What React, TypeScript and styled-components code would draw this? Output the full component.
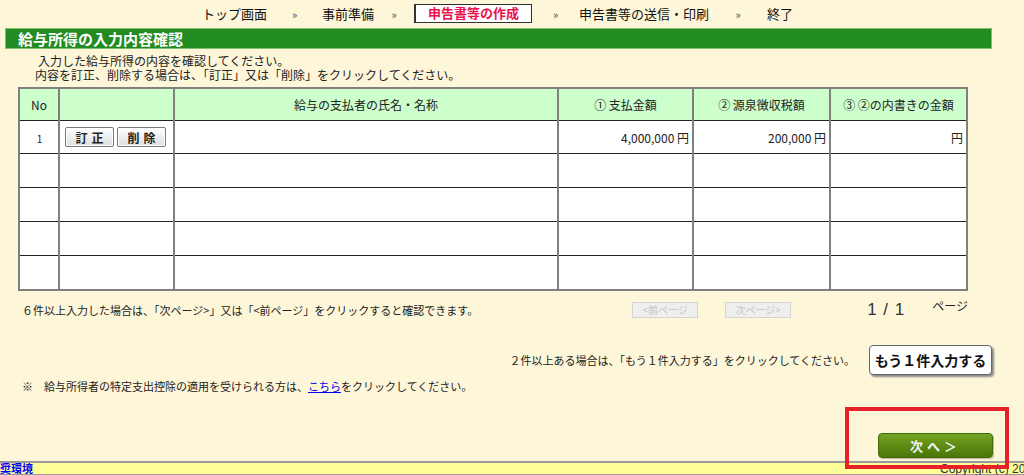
import React from "react";
import styled, { createGlobalStyle } from "styled-components";

const Global = createGlobalStyle`
  html, body { margin: 0; padding: 0; background: #fef6d9; }
  body { font-family: "Noto Sans CJK JP", "Noto Sans", sans-serif; color: #222; overflow: hidden; }
`;

const Page = styled.div`
  position: relative;
  width: 1024px;
  height: 475px;
  overflow: hidden;
  background: #fef6d9;
  font-size: 12px;
`;

const Nav = styled.div`
  display: flex;
  align-items: center;
  height: 28px;
  padding-left: 202px;
  font-size: 13px;
  line-height: 16px;
  color: #111;
`;

const NavItem = styled.span<{ $active?: boolean }>`
  white-space: nowrap;
  ${(p) =>
    p.$active
      ? `
    display: inline-flex; justify-content: center; align-items: center;
    width: 118px; height: 19px; box-sizing: border-box;
    background: #fff; border: 1px solid #333; border-left-width: 2px;
    color: #e8134e; font-weight: bold; margin-top: -2px;
  `
      : ""}
`;

const Sep = styled.span<{ $w: number }>`
  display: inline-block;
  width: ${(p) => p.$w}px;
  text-align: center;
  font-size: 11px;
  color: #444;
`;

const TitleBar = styled.div`
  margin-left: 5px;
  width: 987px;
  height: 21px;
  box-sizing: border-box;
  background: #228b22;
  border: 1px solid #7fbf6f;
  color: #fff;
  font-weight: bold;
  font-size: 15px;
  line-height: 19px;
  padding-left: 12px;
`;

const Intro = styled.div`
  margin-top: 5px;
  padding-left: 35px;
  font-size: 12px;
  line-height: 14px;
  p { margin: 0; }
  p:first-child { text-indent: 3px; }
`;

const Table = styled.table`
  margin: 5px 0 0 18px;
  border-collapse: collapse;
  table-layout: fixed;
  background: #fff;
  border: 2px solid #808080;
`;

const Th = styled.th<{ $w: number }>`
  width: ${(p) => p.$w}px;
  height: 31px;
  background: #ccffcc;
  font-weight: normal;
  font-size: 12px;
  color: #222;
  border-left: 2px solid #808080;
  border-bottom: 1px solid #222;
  padding: 0;
`;

const Tr = styled.tr<{ $h: number }>`
  height: ${(p) => p.$h}px;
`;

const Td = styled.td<{ $align?: string }>`
  padding: 0 3px 0 4px;
  border-left: 2px solid #808080;
  border-top: 1px solid #222;
  text-align: ${(p) => p.$align || "left"};
  font-size: 12px;
  white-space: nowrap;
`;

const SmallNo = styled.span`
  font-size: 10px;
`;

const EditBtn = styled.button`
  width: 49px;
  height: 20px;
  margin: 0 2px 0 1px;
  padding: 0;
  border: 1px solid #777;
  border-radius: 2px;
  background: linear-gradient(#ffffff, #dedede);
  font-family: inherit;
  font-weight: bold;
  font-size: 12px;
  letter-spacing: 4px;
  text-indent: 4px;
  color: #222;
  box-shadow: inset 0 0 0 1px #fff;
`;

const PageRow = styled.div`
  display: flex;
  align-items: center;
  justify-content: space-between;
  margin-top: 7px;
  height: 24px;
  padding: 0 56px 0 22px;
  font-size: 11px;
`;

const Pager = styled.div`
  display: flex;
  align-items: center;
`;

const DisabledBtn = styled.button<{ $ml: number }>`
  margin-left: ${(p) => p.$ml}px;
  width: 66px;
  height: 16px;
  padding: 0;
  border: 1px solid #d4d4d4;
  background: #efefef;
  color: #c4c4c4;
  font-family: inherit;
  font-size: 10px;
  line-height: 14px;
`;

const PageNum = styled.span`
  margin-left: 76px;
  font-family: "Liberation Sans", sans-serif;
  font-size: 17px;
  letter-spacing: 1px;
  color: #333;
`;

const PageLabel = styled.span`
  margin-left: 27px;
  margin-top: -8px;
  font-size: 12px;
`;

const AddRow = styled.div`
  display: flex;
  align-items: center;
  justify-content: flex-end;
  gap: 14px;
  margin-top: 23px;
  height: 30px;
  padding-right: 32px;
  font-size: 11px;
`;

const AddBtn = styled.button`
  width: 123px;
  height: 30px;
  padding: 0;
  border: 1px solid #666;
  border-radius: 4px;
  background: #fff;
  box-shadow: 2px 2px 2px #8a8a8a;
  font-family: inherit;
  font-weight: bold;
  font-size: 14px;
  color: #111;
`;

const Note = styled.div`
  margin-top: 5px;
  height: 13px;
  line-height: 13px;
  padding-left: 22px;
  font-size: 11px;
  a { color: #0000ee; text-decoration: underline; }
`;

const NextRow = styled.div`
  display: flex;
  justify-content: flex-end;
  margin-top: 40px;
  padding-right: 31px;
`;

const NextBtn = styled.button`
  width: 115px;
  height: 25px;
  padding: 0;
  border: 1px solid #3f6a08;
  border-radius: 4px;
  background: linear-gradient(#75a324, #5a8a12 55%, #4b780a);
  box-shadow: 1px 1px 1px rgba(0, 0, 0, 0.25);
  color: #f4f4f4;
  font-family: inherit;
  font-weight: bold;
  font-size: 13px;
  letter-spacing: 4px;
`;

const Footer = styled.div`
  display: grid;
  grid-template-columns: 940px max-content;
  align-items: start;
  margin-top: 3px;
  width: 1200px;
  height: 11px;
  background: #ffff99;
  border-top: 2px solid #9a9a9a;
  border-bottom: 2px solid #9a9a9a;
  font-size: 11px;
  line-height: 11px;
`;

const EnvCell = styled.div`
  overflow: hidden;
  height: 11px;
`;

const EnvLink = styled.a`
  display: inline-block;
  margin-left: -11px;
  color: #0000ff;
  font-weight: bold;
  font-size: 11px;
  line-height: 11px;
  text-decoration: underline;
`;

const Copyright = styled.span`
  font-family: "Liberation Sans", sans-serif;
  font-size: 12px;
  line-height: 12px;
  color: #333;
  white-space: nowrap;
`;

const Highlight = styled.div`
  position: absolute;
  left: 845px;
  top: 407px;
  width: 164px;
  height: 62px;
  box-sizing: border-box;
  border: 4px solid #e8202a;
  pointer-events: none;
`;

const widths = [38, 113, 382, 133, 135, 135];

const emptyRows = [0, 1, 2, 3];

export default function App() {
  return (
    <>
      <Global />
      <Page>
        <Nav>
          <NavItem>トップ画面</NavItem>
          <Sep $w={55}>»</Sep>
          <NavItem>事前準備</NavItem>
          <Sep $w={40}>»</Sep>
          <NavItem $active>申告書等の作成</NavItem>
          <Sep $w={47}>»</Sep>
          <NavItem>申告書等の送信・印刷</NavItem>
          <Sep $w={58}>»</Sep>
          <NavItem>終了</NavItem>
        </Nav>
        <TitleBar>給与所得の入力内容確認</TitleBar>
        <Intro>
          <p>入力した給与所得の内容を確認してください。</p>
          <p>内容を訂正、削除する場合は、「訂正」又は「削除」をクリックしてください。</p>
        </Intro>
        <Table>
          <thead>
            <tr>
              <Th $w={widths[0]}>No</Th>
              <Th $w={widths[1]}></Th>
              <Th $w={widths[2]}>給与の支払者の氏名・名称</Th>
              <Th $w={widths[3]}>① 支払金額</Th>
              <Th $w={widths[4]}>② 源泉徴収税額</Th>
              <Th $w={widths[5]}>③ ②の内書きの金額</Th>
            </tr>
          </thead>
          <tbody>
            <Tr $h={33}>
              <Td $align="center">
                <SmallNo>1</SmallNo>
              </Td>
              <Td>
                <EditBtn>訂正</EditBtn>
                <EditBtn>削除</EditBtn>
              </Td>
              <Td></Td>
              <Td $align="right">4,000,000 円</Td>
              <Td $align="right">200,000 円</Td>
              <Td $align="right">円</Td>
            </Tr>
            {emptyRows.map((r) => (
              <Tr $h={34} key={r}>
                <Td></Td>
                <Td></Td>
                <Td></Td>
                <Td></Td>
                <Td></Td>
                <Td></Td>
              </Tr>
            ))}
          </tbody>
        </Table>
        <PageRow>
          <span>６件以上入力した場合は、「次ページ&gt;」又は「&lt;前ページ」をクリックすると確認できます。</span>
          <Pager>
            <DisabledBtn $ml={0} disabled>
              &lt;前ページ
            </DisabledBtn>
            <DisabledBtn $ml={27} disabled>
              次ページ&gt;
            </DisabledBtn>
            <PageNum>1 / 1</PageNum>
            <PageLabel>ページ</PageLabel>
          </Pager>
        </PageRow>
        <AddRow>
          <span>２件以上ある場合は、「もう１件入力する」をクリックしてください。</span>
          <AddBtn>もう１件入力する</AddBtn>
        </AddRow>
        <Note>
          ※　給与所得者の特定支出控除の適用を受けられる方は、<a href="#">こちら</a>をクリックしてください。
        </Note>
        <NextRow>
          <NextBtn>次へ＞</NextBtn>
        </NextRow>
        <Footer>
          <EnvCell>
            <EnvLink href="#">推奨環境</EnvLink>
          </EnvCell>
          <Copyright>Copyright (c) 2019 National Tax Agency</Copyright>
        </Footer>
        <Highlight />
      </Page>
    </>
  );
}
